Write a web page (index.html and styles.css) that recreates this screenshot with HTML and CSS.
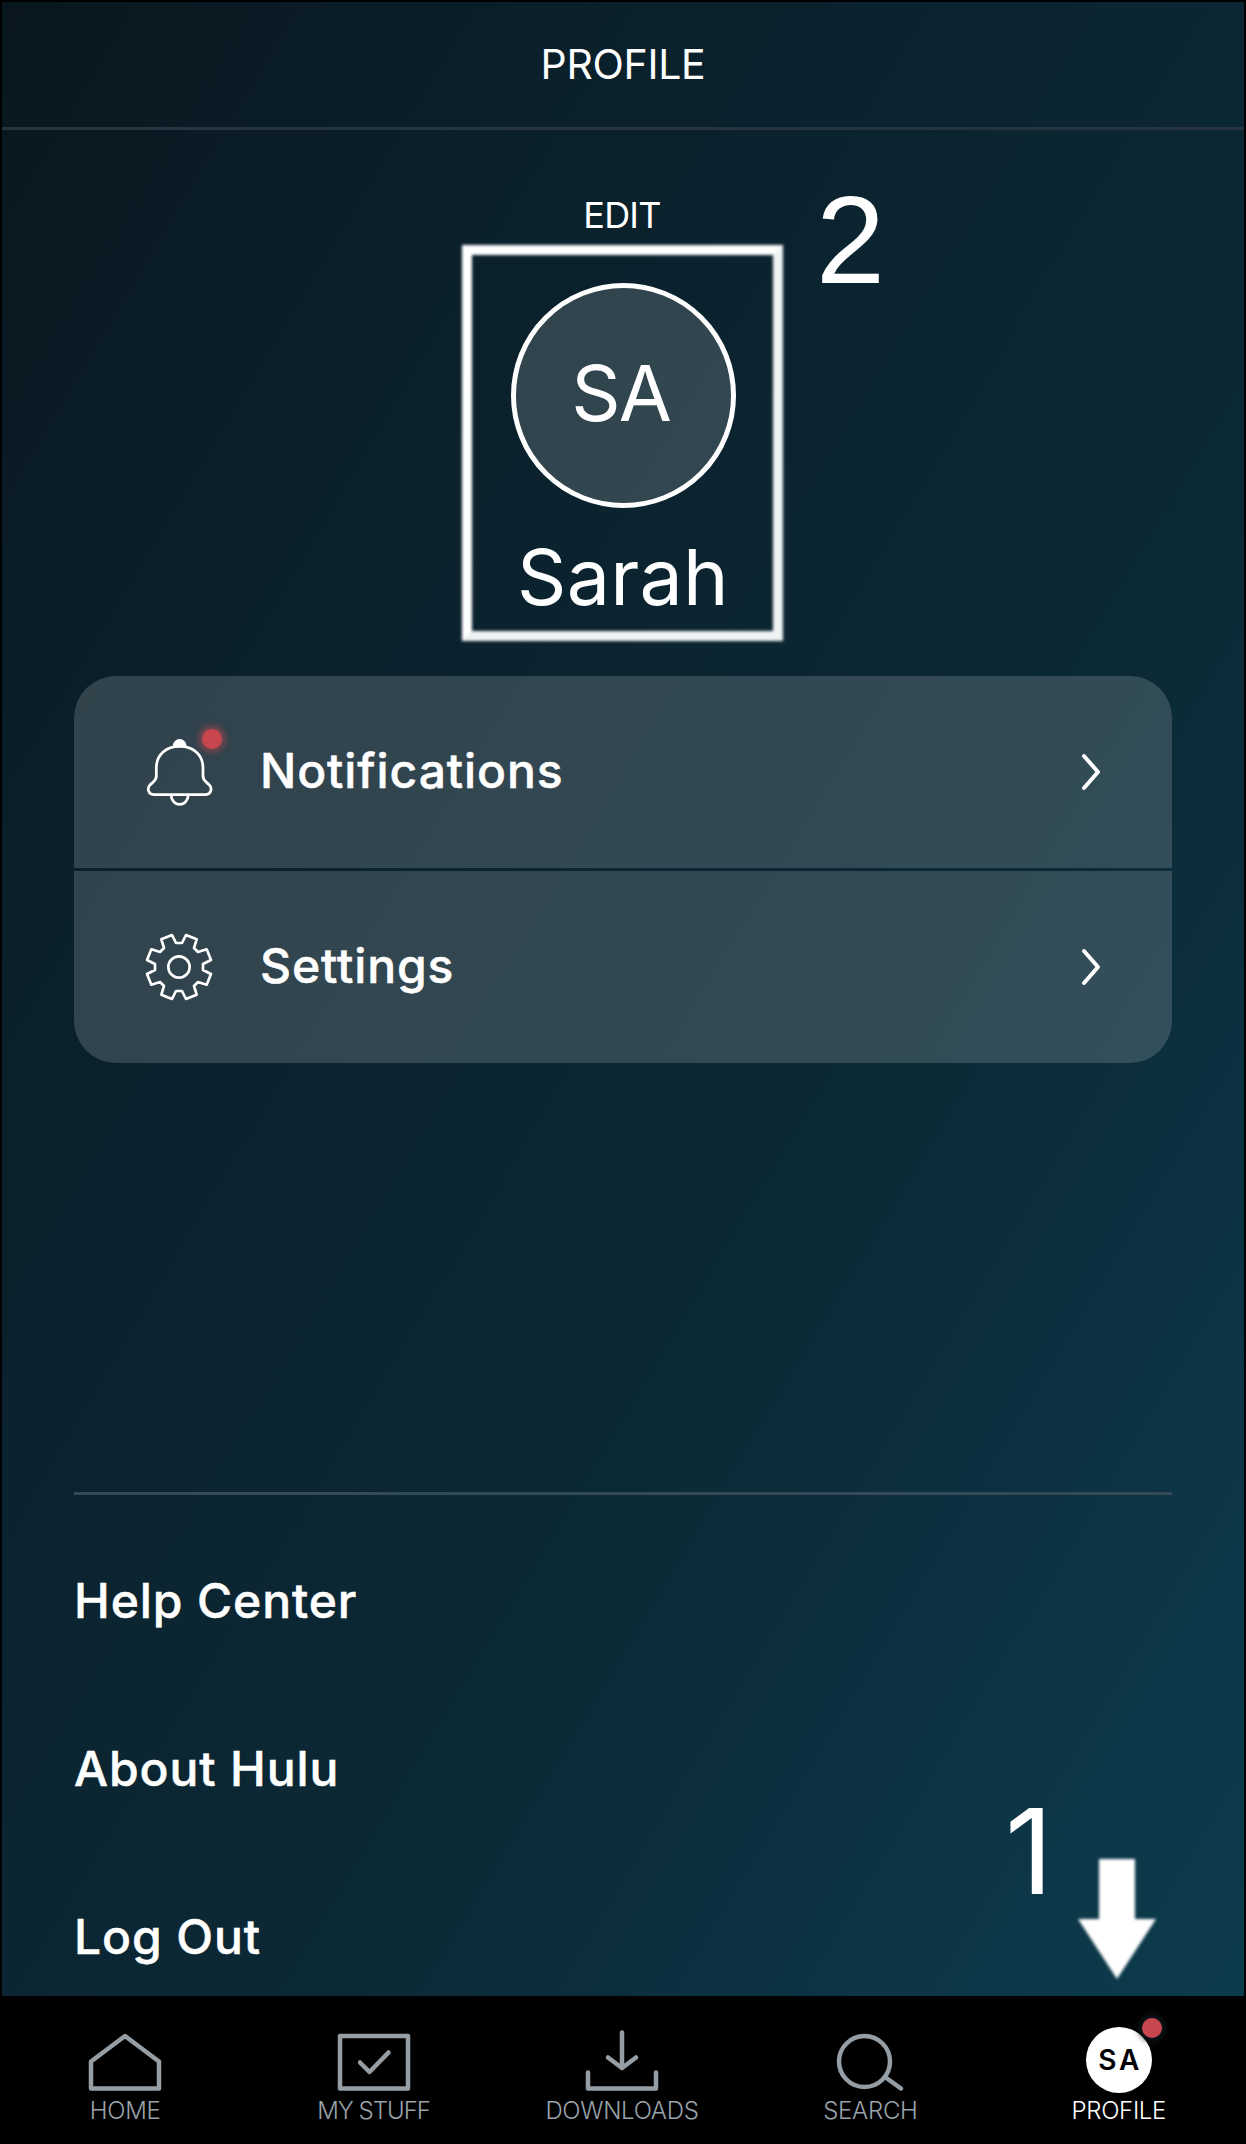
FILE: index.html
```
<!DOCTYPE html>
<html lang="en">
<head>
    <meta charset="UTF-8">
    <meta name="viewport" content="width=device-width, initial-scale=1.0">
    <title>Profile</title>
    <link rel="stylesheet" href="styles.css">
</head>
<body>
    <div class="screen">
        <header class="header">
            <h1>PROFILE</h1>
        </header>
        <main class="content">
            <div class="profile">
                <a class="edit">EDIT</a>
                <div class="highlight">
                    <div class="avatar"><span>SA</span></div>
                    <div class="name">Sarah</div>
                </div>
                <span class="step step-two">2</span>
            </div>

            <div class="card">
                <div class="row">
                    <div class="row-icon">
                        <svg class="bell" viewBox="0 0 210 220" preserveAspectRatio="none">
                            <path d="M28 177C12 177 8 158 18 148C28 138 36 136 36 122V98C36 56 66 34 104 34C142 34 172 56 172 98V122C172 136 180 138 190 148C200 158 196 177 180 177Z"/>
                            <path d="M79 178a25 28 0 0 0 50 0"/>
                            <path class="knob" d="M84 34a20 22 0 0 1 40 0z"/>
                        </svg>
                        <span class="dot"></span>
                    </div>
                    <span class="row-label">Notifications</span>
                    <svg class="chevron" viewBox="0 0 22 40"><path d="M4 4L18 20L4 36"/></svg>
                </div>
                <div class="row">
                    <div class="row-icon">
                        <svg class="gear" viewBox="-105 -105 210 210">
                            <path d="M-21-96L-9-72H9L21-96L53-83L45-57L57-45L83-53L96-21L72-9V9L96 21L83 53L57 45L45 57L53 83L21 96L9 72H-9L-21 96L-53 83L-45 57L-57 45L-83 53L-96 21L-72 9V-9L-96-21L-83-53L-57-45L-45-57L-53-83Z"/>
                            <circle r="32"/>
                        </svg>
                    </div>
                    <span class="row-label">Settings</span>
                    <svg class="chevron" viewBox="0 0 22 40"><path d="M4 4L18 20L4 36"/></svg>
                </div>
            </div>

            <div class="links">
                <a>Help Center</a>
                <a>About Hulu</a>
                <a>Log Out</a>
            </div>
        </main>

        <div class="pointer">
            <span class="step">1</span>
            <svg class="arrow" viewBox="0 0 86 132"><path d="M25 6H61V66H82L43 126L4 66H25Z"/></svg>
        </div>

        <nav class="tabs">
            <a class="tab">
                <svg viewBox="0 0 80 70"><path d="M6 58.5V31.5L40 6L74 31.5V58.5Z"/></svg>
                <span>HOME</span>
            </a>
            <a class="tab">
                <svg viewBox="0 0 80 70"><path d="M6 6H74V58.5H6Z"/><path d="M26 32.5L35.5 42L54.5 22.5"/></svg>
                <span class="stuff">MY STUFF</span>
            </a>
            <a class="tab">
                <svg viewBox="0 0 80 70"><path d="M6 42.5V58.5H74V42.5M40 2.5V38M26 27.5L40 38L54 27.5"/></svg>
                <span>DOWNLOADS</span>
            </a>
            <a class="tab">
                <svg viewBox="0 0 80 70"><circle cx="34.5" cy="31.5" r="25.5"/><path d="M55 47L71 58.5"/></svg>
                <span>SEARCH</span>
            </a>
            <a class="tab active">
                <div class="mini-avatar">SA<i class="dot"></i></div>
                <span>PROFILE</span>
            </a>
        </nav>
    </div>
</body>
</html>
```
FILE: styles.css
```
* {
    box-sizing: border-box;
}
html, body {
    margin: 0;
    padding: 0;
    background: #000;
}
body {
    font-family: Inter, "Liberation Sans", sans-serif;
    color: white;
}
.screen {
    position: relative;
    width: 1246px;
    height: 2144px;
    padding: 2px 2px 0;
    display: flex;
    flex-direction: column;
    overflow: hidden;
    background: linear-gradient(121deg, #09161e 0%, #0a1f2a 22%, #0b2531 46%, #0b2a36 64%, #0c2e3d 73%, #0c3748 89%, #0c3b4c 100%) 2px 2px / 1242px 1994px no-repeat;
}
.header {
    height: 128px;
    flex: none;
    display: flex;
    align-items: center;
    justify-content: center;
    padding-bottom: 1px;
    border-bottom: 3px solid #25343f;
}
.header h1 {
    margin: 0;
    font-size: 41px;
    font-weight: 400;
    letter-spacing: -0.3px;
}
.content {
    flex: 1;
    padding: 0 72px;
}
.profile {
    position: relative;
    height: 546px;
    padding-top: 62px;
    display: flex;
    flex-direction: column;
    align-items: center;
}
.edit {
    height: 46px;
    line-height: 46px;
    padding-right: 2px;
    font-size: 36px;
    font-weight: 400;
    letter-spacing: -0.8px;
}
.highlight {
    position: relative;
    width: 323px;
    height: 399px;
    margin-top: 6px;
    padding-top: 39px;
    display: flex;
    flex-direction: column;
    align-items: center;
}
.highlight::before {
    content: "";
    position: absolute;
    inset: 1px 2px 2px 0;
    border: 10px solid white;
    border-right-color: #f0f3f4;
    border-bottom-color: #f0f3f4;
    filter: blur(1.4px);
}
.avatar {
    width: 225px;
    height: 225px;
    flex: none;
    border: 5px solid white;
    border-radius: 50%;
    background: rgba(255, 255, 255, 0.16);
    background-clip: padding-box;
    display: flex;
    align-items: center;
    justify-content: center;
    padding: 0 5px 5px 0;
    font-size: 77px;
    font-weight: 400;
    letter-spacing: -2px;
}
.name {
    margin-top: 21px;
    line-height: 96px;
    font-size: 77px;
    font-weight: 400;
    letter-spacing: 0.3px;
}
.step {
    font-family: "Liberation Sans", Arial, sans-serif;
    font-size: 124px;
    line-height: 1;
}
.step-two {
    position: absolute;
    left: 742px;
    top: 48px;
}
.card {
    display: grid;
    gap: 3px;
    border-radius: 42px;
    overflow: hidden;
}
.row {
    height: 192px;
    display: flex;
    align-items: center;
    padding: 0 70px;
    background: rgba(255, 255, 255, 0.16);
}
.row-icon {
    position: relative;
    width: 72px;
    height: 74px;
    margin-right: 44px;
    display: flex;
    align-items: center;
}
.row svg, .tab svg {
    fill: none;
    stroke: white;
    stroke-linecap: round;
    stroke-linejoin: round;
}
.bell, .gear {
    width: 70px;
    stroke-width: 8;
}
.bell {
    width: 72px;
    height: 74px;
}
.row .knob {
    fill: white;
    stroke: none;
}
.dot {
    position: absolute;
    width: 20px;
    height: 20px;
    border-radius: 50%;
    background: #c8464e;
}
.row .dot {
    left: 58px;
    top: -6px;
    box-shadow: 0 0 6px 3px rgba(200, 70, 78, 0.55);
}
.row-label {
    flex: 1;
    padding-bottom: 4px;
    font-size: 48px;
    font-weight: 500;
    letter-spacing: 0.9px;
    -webkit-text-stroke: 0.5px white;
}
.chevron {
    width: 22px;
    height: 40px;
    stroke-width: 4;
}
.links {
    margin-top: 429px;
    border-top: 3px solid #344a56;
    padding-top: 22px;
    display: flex;
    flex-direction: column;
}
.links a {
    height: 168px;
    line-height: 168px;
    font-size: 48px;
    font-weight: 500;
    letter-spacing: 0.9px;
    -webkit-text-stroke: 0.5px white;
}
.pointer {
    position: absolute;
    left: 1005px;
    top: 1792px;
    display: flex;
}
.pointer .step {
    width: 69px;
    font-family: Inter, sans-serif;
    font-size: 118px;
    font-weight: 400;
}
.arrow {
    width: 86px;
    height: 132px;
    margin-top: 61px;
    fill: white;
    filter: blur(1.8px);
}
.tabs {
    position: absolute;
    left: 0;
    right: 0;
    bottom: 0;
    height: 148px;
    display: grid;
    grid-template-columns: repeat(5, 1fr);
    padding: 0 3px 0 1px;
    background: #000;
}
.tab {
    display: flex;
    flex-direction: column;
    align-items: center;
    padding-top: 34px;
    font-size: 24px;
    font-weight: 300;
    letter-spacing: -0.3px;
    color: #9aa3aa;
}
.tab svg {
    width: 80px;
    height: 70px;
    stroke: #969ea5;
    stroke-width: 4.5;
}
.tab span {
    line-height: 24px;
    margin-top: -1px;
}
.tab .stuff {
    letter-spacing: -1px;
}
.tab.active {
    color: white;
}
.mini-avatar {
    position: relative;
    width: 66px;
    height: 66px;
    margin: -3px 0 7px;
    padding-left: 3px;
    border-radius: 50%;
    background: white;
    color: #000;
    font-size: 28px;
    font-weight: 600;
    letter-spacing: 3px;
    line-height: 66px;
    text-align: center;
}
.mini-avatar .dot {
    left: 56px;
    top: -9px;
    box-shadow: 0 0 6px 3px rgba(20, 30, 38, 0.8);
}
```
